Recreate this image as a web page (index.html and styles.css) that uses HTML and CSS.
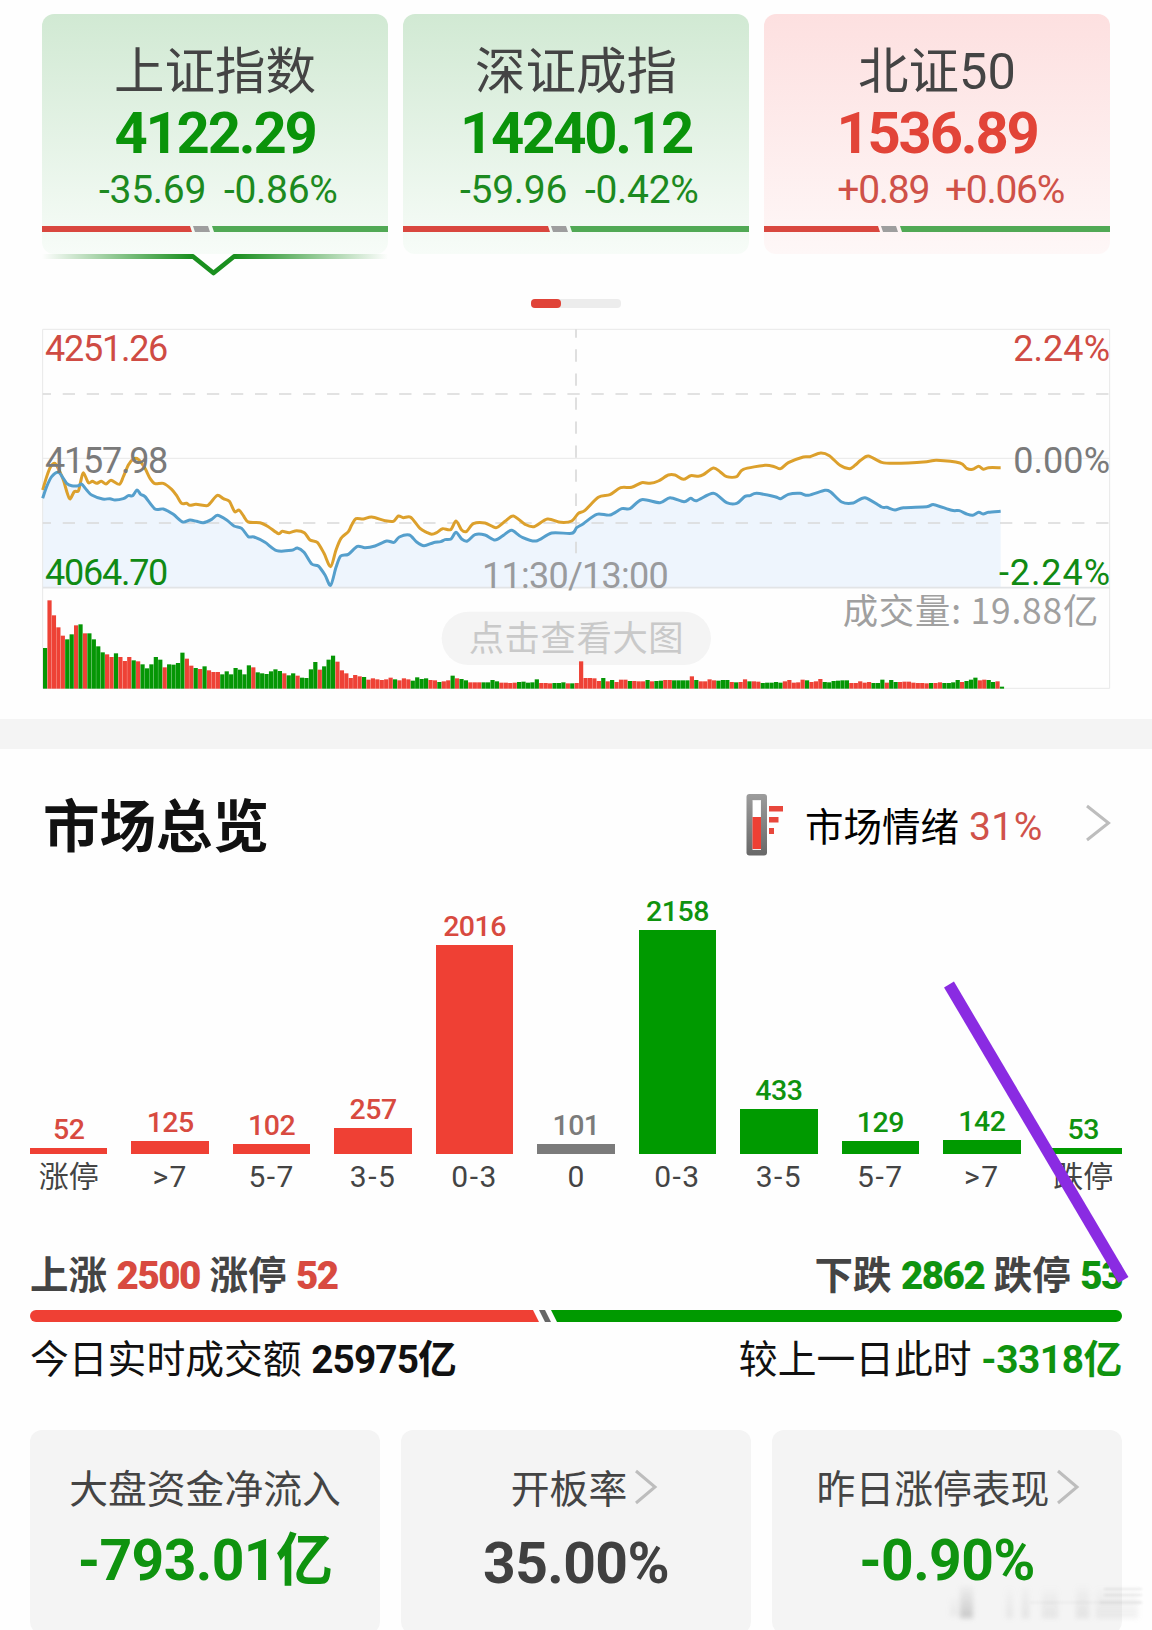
FILE: index.html
```html
<!DOCTYPE html>
<html lang="zh-CN">
<head>
    <meta charset="UTF-8">
    <meta name="viewport" content="width=device-width, initial-scale=1.0">
    <title>市场总览</title>
    <link rel="stylesheet" href="styles.css">
</head>
<body>
    <div id="indexes">
        <div class="index_card down">
            <div class="index_name">上证指数</div>
            <div class="index_price">4122.29</div>
            <div class="index_change"><span>-35.69</span><span>-0.86%</span></div>
            <div class="ratio"><i class="r" style="width: 150px"></i><i class="n"></i><i class="g"></i></div>
            <svg class="pointer" width="346" height="24" viewBox="0 0 346 24">
                <defs>
                    <linearGradient id="fade" gradientUnits="userSpaceOnUse" x1="0" y1="0" x2="346" y2="0">
                        <stop offset="0" stop-color="#1a8f1f" stop-opacity="0"/>
                        <stop offset="0.43" stop-color="#1a8f1f"/>
                        <stop offset="0.56" stop-color="#1a8f1f"/>
                        <stop offset="1" stop-color="#1a8f1f" stop-opacity="0"/>
                    </linearGradient>
                </defs>
                <path d="M0 2.500H151L171.500 19L192 2.500H346" fill="none" stroke="url(#fade)" stroke-width="4.800" stroke-linejoin="round"/>
            </svg>
        </div>
        <div class="index_card down">
            <div class="index_name">深证成指</div>
            <div class="index_price">14240.12</div>
            <div class="index_change"><span>-59.96</span><span>-0.42%</span></div>
            <div class="ratio"><i class="r" style="width: 147px"></i><i class="n"></i><i class="g"></i></div>
        </div>
        <div class="index_card up">
            <div class="index_name">北证50</div>
            <div class="index_price">1536.89</div>
            <div class="index_change"><span>+0.89</span><span>+0.06%</span></div>
            <div class="ratio"><i class="r" style="width: 116px"></i><i class="n"></i><i class="g"></i></div>
        </div>
    </div>

    <div id="pager"><i></i></div>

    <!-- 分时图，坐标为 3 倍像素 -->
    <svg id="chart" width="1122" height="380" viewBox="0 0 3366 1140">
        <path id="area" fill="#eef5fd"/>
        <g fill="none" stroke="#e8e8e8" stroke-width="3">
            <path d="M38 28H3239V1105H38Z"/>
            <path d="M38 415H3239"/>
            <path d="M38 803H3239" stroke="#e2e4e6" stroke-width="5"/>
        </g>
        <g fill="none" stroke="#d9d9d9" stroke-width="5" stroke-dasharray="37 35.100" stroke-dashoffset="12">
            <path d="M38 222H3239"/>
            <path d="M38 609H3239"/>
            <path d="M1638 28V700"/>
        </g>
        <rect x="1235" y="875" width="808" height="160" rx="80" fill="#f4f4f4"/>
        <g id="volume"></g>
        <text class="cn hint" x="1316" y="992" textLength="645">点击查看大图</text>
        <text class="cn volume_text" x="2438" y="911" textLength="767">成交量: 19.88亿</text>
        <text class="num" x="45" y="122" textLength="370" fill="#cf4b43">4251.26</text>
        <text class="num" x="2950" y="122" textLength="290" fill="#cf4b43">2.24%</text>
        <path id="avgLine" fill="none" stroke="#dca02c" stroke-width="9" stroke-linejoin="round"/>
        <path id="priceLine" fill="none" stroke="#559fcc" stroke-width="9" stroke-linejoin="round"/>
        <text class="num" x="45" y="458" textLength="370" fill="#7a7a7a">4157.98</text>
        <text class="num" x="2950" y="458" textLength="290" fill="#7a7a7a">0.00%</text>
        <text class="num" x="45" y="794" textLength="370" fill="#108a14">4064.70</text>
        <text class="num" x="2907" y="794" textLength="333" fill="#108a14">-2.24%</text>
        <text class="num" x="1356" y="803" textLength="560" fill="#9a9b9d">11:30/13:00</text>
    </svg>

    <div id="band"></div>

    <div id="overview_head">
        <h2>市场总览</h2>
        <svg class="thermo" width="38" height="64" viewBox="0 0 38 64">
            <defs>
                <linearGradient id="metal" x1="0" y1="0" x2="0" y2="1">
                    <stop offset="0" stop-color="#9c9c9c"/>
                    <stop offset="1" stop-color="#686868"/>
                </linearGradient>
            </defs>
            <rect x="0.500" y="1" width="20.500" height="61.500" rx="3" fill="url(#metal)"/>
            <rect x="6.500" y="7" width="8.500" height="50" fill="#eee"/>
            <rect x="7" y="8" width="7.500" height="17" fill="#fff"/>
            <rect x="6.500" y="24" width="8.500" height="32" fill="#ee4034"/>
            <path d="M23 13H37V18.500H23ZM23 24H32.500V29.500H23ZM23 35H28V41H23Z" fill="#e8473c"/>
        </svg>
        <span class="mood">市场情绪</span>
        <span class="mood_value">31%</span>
        <svg class="more" width="26" height="38" viewBox="0 0 26 38"><path d="M2 2L23.500 19L2 36" fill="none" stroke="#bdbdbd" stroke-width="3"/></svg>
    </div>

    <div id="histogram">
        <div class="col red"><b>52</b><i style="height: 6px"></i><span>涨停</span></div>
        <div class="col red"><b>125</b><i style="height: 13px"></i><span class="range">&gt;7</span></div>
        <div class="col red"><b>102</b><i style="height: 10px"></i><span class="range">5-7</span></div>
        <div class="col red"><b>257</b><i style="height: 26px"></i><span class="range">3-5</span></div>
        <div class="col red"><b>2016</b><i style="height: 209px"></i><span class="range">0-3</span></div>
        <div class="col gray"><b>101</b><i style="height: 10px"></i><span>0</span></div>
        <div class="col green"><b>2158</b><i style="height: 224px"></i><span class="range">0-3</span></div>
        <div class="col green"><b>433</b><i style="height: 45px"></i><span class="range">3-5</span></div>
        <div class="col green"><b>129</b><i style="height: 13px"></i><span class="range">5-7</span></div>
        <div class="col green"><b>142</b><i style="height: 14px"></i><span class="range">&gt;7</span></div>
        <div class="col green"><b>53</b><i style="height: 6px"></i><span>跌停</span></div>
    </div>

    <div class="row strong">
        <div>上涨 <b class="red">2500</b> 涨停 <b class="red">52</b></div>
        <div>下跌 <b class="green">2862</b> 跌停 <b class="green">53</b></div>
    </div>
    <div id="updown"><i class="r"></i><i class="n"></i><i class="g"></i></div>
    <div class="row total">
        <div>今日实时成交额 <b>25975亿</b></div>
        <div>较上一日此时 <b class="green">-3318亿</b></div>
    </div>

    <div id="stats">
        <div class="stat">
            <div class="stat_name">大盘资金净流入</div>
            <div class="stat_value green">-793.01亿</div>
        </div>
        <div class="stat">
            <div class="stat_name short">开板率<svg width="24" height="36" viewBox="0 0 24 36"><path d="M2 2L21 18L2 34" fill="none" stroke="#bdbdbd" stroke-width="3"/></svg></div>
            <div class="stat_value dark">35.00%</div>
        </div>
        <div class="stat">
            <div class="stat_name long">昨日涨停表现<svg width="24" height="36" viewBox="0 0 24 36"><path d="M2 2L21 18L2 34" fill="none" stroke="#bdbdbd" stroke-width="3"/></svg></div>
            <div class="stat_value green">-0.90%</div>
        </div>
    </div>

    <svg id="mark" width="1152" height="1630" viewBox="0 0 1152 1630">
        <defs>
            <linearGradient id="smear" x1="0" y1="0" x2="0" y2="1">
                <stop offset="0" stop-color="#888" stop-opacity="0.100"/>
                <stop offset="1" stop-color="#888"/>
            </linearGradient>
        </defs>
        <path d="M949 984.500L1123.500 1280" stroke="#8a2be2" stroke-width="11.500"/>
        <g class="smudge" fill="url(#smear)">
            <rect x="950" y="1596" width="8" height="20" opacity="0.100"/>
            <rect x="960" y="1586" width="13" height="32" opacity="0.400"/>
            <rect x="1006" y="1588" width="7" height="30" opacity="0.120"/>
            <rect x="1022" y="1586" width="7" height="32" opacity="0.160"/>
            <rect x="1042" y="1588" width="16" height="30" opacity="0.140"/>
            <rect x="1076" y="1586" width="13" height="32" opacity="0.160"/>
            <rect x="1096" y="1588" width="42" height="30" opacity="0.120"/>
        </g>
        <g class="smudge thin" fill="#999">
            <rect x="1104" y="1588" width="38" height="2" opacity="0.180"/>
            <rect x="1104" y="1594" width="38" height="2" opacity="0.180"/>
            <rect x="1100" y="1601" width="42" height="3" opacity="0.180"/>
            <rect x="1030" y="1601" width="70" height="3" opacity="0.060"/>
        </g>
    </svg>

    <script src="chart.js"></script>
</body>
</html>
```
FILE: styles.css
```css
body{
    margin: 0;
    width: 1152px;
    height: 1630px;
    overflow: hidden;
    position: relative;
    background-color: #fefefe;
    color: #111;
    font-family: Roboto, "Noto Sans CJK SC", sans-serif;
}
i{
    display: block;
    font-style: normal;
}
.red{color: #d84a40;}
.green{color: #0f930f;}
.dark{color: #404040;}

#indexes{
    display: flex;
    gap: 15px;
    padding: 14px 42px 0;
}
.index_card{
    position: relative;
    width: 346px;
    height: 240px;
    box-sizing: border-box;
    padding-top: 29px;
    border-radius: 12px;
    text-align: center;
}
.index_card.down{
    background: linear-gradient(#d1e9d3, #f7fcf8);
    color: #0a930a;
}
.index_card.up{
    background: linear-gradient(#fde0e0, #fef7f7);
    color: #e24438;
}
.index_name{
    height: 57px;
    line-height: 58px;
    font-size: 50.500px;
    color: #444;
}
.index_price{
    height: 62px;
    line-height: 67px;
    font-size: 58px;
    font-weight: 700;
    letter-spacing: -2.2px;
}
.index_change{
    display: flex;
    gap: 18px;
    height: 52px;
    line-height: 57px;
    font-size: 39px;
    letter-spacing: -0.3px;
}
.index_change span{
    flex: 1;
    text-align: left;
}
.index_change span:first-child{
    text-align: right;
}
.down .index_change{color: #1c8a20;}
.up .index_change{
    gap: 16px;
    letter-spacing: -1.3px;
    color: #cf5148;
}

.ratio{
    display: flex;
    height: 6px;
    margin-top: 12px;
}
.ratio .r{
    background-color: #d9473f;
    clip-path: polygon(0 0, calc(100% - 2px) 0, 100% 100%, 0 100%);
}
.ratio .n{
    width: 17px;
    background-color: #9e9e9e;
    margin: 0 2px 0 1px;
    clip-path: polygon(0 0, calc(100% - 2px) 0, 100% 100%, 2px 100%);
}
.ratio .g{
    flex: 1;
    background-color: #51a955;
    clip-path: polygon(0 0, 100% 0, 100% 100%, 2px 100%);
}
.pointer{
    position: absolute;
    top: 100%;left: 0;
}

#pager{
    width: 90px;
    height: 9px;
    margin: 45px auto 0;
    border-radius: 4px;
    background-color: #ececec;
}
#pager i{
    width: 30px;
    height: 9px;
    border-radius: 4px;
    background-color: #e04338;
}

#chart{
    display: block;
    margin: 12px 0 0 30px;
}
#chart .num{
    font-size: 108px;
    stroke: currentColor;
    stroke-width: 0;
}
#chart .cn{
    font-family: "Noto Sans CJK SC", sans-serif;
    font-size: 106px;
}
#chart .hint{fill: #c9c9c9;}
#chart .volume_text{fill: #a0a0a0;}

#band{
    height: 30px;
    margin-top: 19px;
    background-color: #f4f4f4;
}

#overview_head{
    display: flex;
    align-items: center;
    height: 92px;
    padding: 30px 41px 0 43px;
}
#overview_head h2{
    margin: 5px auto 0 0;
    font-size: 56.500px;
    line-height: 92px;
}
.mood{
    margin: -2px 0 0 21px;
    font-size: 38.500px;
    color: #000;
}
.mood_value{
    margin: 4px 0 0 10px;
    width: 76px;
    font-size: 39px;
    letter-spacing: 0.4px;
    color: #d0524a;
}
.more{
    margin: -4px 0 0 40px;
}

#histogram{
    display: grid;
    grid-template-columns: repeat(11, 1fr);
    column-gap: 24px;
    height: 319px;
    padding: 4px 30px 0;
}
.col{
    display: flex;
    flex-direction: column;
    justify-content: flex-end;
    align-items: center;
}
.col b{
    font-size: 28.500px;
    font-weight: 500;
    line-height: 35px;
    letter-spacing: -0.5px;
}
.col i{
    width: 100%;
    margin-top: 1px;
}
.col span{
    height: 40px;
    line-height: 46px;
    font-size: 30px;
    color: #444;
}
.col .range{
    letter-spacing: 1.5px;
}
.col.red i{background-color: #ef4034;}
.col.green i{background-color: #009a00;}
.col.gray i{background-color: #7b7b7b;}
.col.gray{color: #7b7b7b;}

.row{
    display: flex;
    justify-content: space-between;
    height: 54px;
    line-height: 54px;
    padding: 0 30px;
    font-size: 38.800px;
}
.row b{
    letter-spacing: -0.9px;
}
.row.total .green{
    letter-spacing: -0.4px;
}
.row.strong{
    height: 52px;
    margin-top: 55px;
    padding-bottom: 1px;
    font-size: 38.500px;
    font-weight: 700;
    color: #444;
}
.row.strong b{
    letter-spacing: -1.5px;
}
.row.total{
    padding-top: 4px;
}
#updown{
    display: flex;
    height: 12px;
    margin: 8px 30px 7px;
    border-radius: 6px;
    overflow: hidden;
}
#updown .r{
    width: 509px;
    background-color: #ef4034;
    clip-path: polygon(0 0, calc(100% - 6px) 0, 100% 100%, 0 100%);
}
#updown .n{
    width: 12px;
    background-color: #666;
    clip-path: polygon(0 0, 6px 0, 100% 100%, 6px 100%);
}
#updown .g{
    flex: 1;
    background-color: #009a00;
    clip-path: polygon(0 0, 100% 0, 100% 100%, 6px 100%);
}

#stats{
    display: grid;
    grid-template-columns: repeat(3, 1fr);
    column-gap: 21px;
    padding: 0 30px;
    margin-top: 43px;
}
.stat{
    height: 204px;
    border-radius: 12px;
    background-color: #f4f4f4;
    text-align: center;
}
.stat_name{
    display: flex;
    justify-content: center;
    align-items: center;
    height: 56px;
    padding-top: 28px;
    font-size: 38.800px;
    color: #444;
}
.stat_name.short{
    padding-left: 17px;
}
.stat_name.long{
    padding-left: 3px;
}
.stat_name svg{
    margin: 1px 0 0 7px;
}
.stat_value{
    height: 80px;
    line-height: 93px;
    font-size: 57px;
    font-weight: 700;
    letter-spacing: -0.6px;
}
.stat_value.dark{
    line-height: 100px;
}

#mark{
    position: absolute;
    top: 0;left: 0;
}
.smudge{
    filter: blur(2.500px);
}
.smudge.thin{
    filter: blur(1px);
}
```
FILE: chart.js
```js
var avg = "38,510 50,470 62,440 75,430 88,452 100,480 112,520 120,537 133,515 145,513 152,485 160,458 175,488 187,484 200,490 214,484 228,492 243,481 268,493 280,470 295,435 310,417 325,418 345,445 360,475 375,491 400,490 425,508 440,527 455,550 470,550 480,556 498,553 530,557 540,550 562,526 580,536 598,544 614,575 627,570 640,587 655,606 690,608 715,620 745,641 757,634 778,638 800,632 823,638 840,660 862,667 882,700 902,740 918,690 933,655 955,635 965,615 978,596 1000,597 1025,591 1065,602 1090,604 1105,588 1120,593 1142,592 1170,625 1190,637 1205,643 1220,638 1238,626 1262,629 1278,603 1295,630 1310,634 1330,611 1365,609 1398,623 1425,604 1450,588 1485,613 1512,620 1552,597 1592,607 1625,603 1645,580 1665,571 1705,532 1740,524 1772,503 1805,502 1835,488 1860,490 1885,483 1915,465 1935,465 1960,478 1982,467 2005,469 2020,464 2050,444 2070,455 2090,470 2120,470 2140,448 2205,436 2233,440 2252,446 2275,428 2320,411 2340,410 2372,399 2398,407 2430,436 2458,446 2475,436 2492,421 2515,408 2555,427 2595,430 2690,425 2720,421 2790,429 2810,445 2828,448 2846,439 2860,448 2875,443 2912,443"
var price = "38,535 50,500 65,470 85,457 100,475 110,490 125,497 145,497 155,492 170,510 185,525 218,537 240,536 255,540 280,536 295,527 308,527 321,510 332,523 345,530 375,567 400,567 430,583 458,606 480,600 500,604 520,608 545,598 562,586 590,600 612,618 635,625 655,650 672,651 705,667 740,692 785,691 802,684 822,697 845,732 865,738 885,765 902,796 918,742 932,708 955,703 982,679 1005,683 1035,678 1070,663 1092,667 1108,651 1138,645 1160,666 1182,677 1210,668 1232,665 1245,659 1263,657 1278,637 1295,657 1312,663 1335,644 1365,645 1395,660 1420,646 1445,631 1475,651 1518,663 1565,639 1625,640 1640,623 1660,611 1700,583 1740,585 1775,566 1800,566 1835,539 1890,548 1920,533 1962,545 1982,535 2000,542 2050,520 2090,548 2120,550 2145,529 2160,527 2180,520 2235,530 2252,536 2275,523 2310,520 2335,526 2385,511 2402,516 2435,546 2470,549 2505,533 2555,561 2570,562 2595,570 2620,563 2690,560 2712,554 2765,571 2788,572 2810,582 2828,586 2846,577 2860,582 2875,577 2912,574"
// 每分钟成交量 R 涨 G 跌
var vol = "G122 R265 R220 R184 R159 G148 G163 R190 G193 R166 G166 G148 G127 G109 R103 R95 G106 R95 R83 R95 G85 R82 G73 G61 G73 G95 G87 R64 G73 G72 G77 G108 R90 R69 G62 R59 G67 R55 R50 R50 G43 G52 G43 G62 G57 G43 G70 R64 G49 G46 G44 G52 G58 G53 R46 G40 G46 R39 G33 G32 G58 G80 R57 G67 G87 G99 R81 R55 R46 R32 R41 R37 G35 R27 R31 R28 R26 R28 R33 G28 R25 R31 R28 G24 G34 G29 G31 R26 R25 G20 R22 R25 G39 R31 G29 G25 R19 R19 R19 G19 G19 G26 G22 R18 R18 R17 R18 G20 G21 G18 G19 G28 R17 R17 R16 G17 G17 G19 R16 G16 R17 R82 R32 R32 R31 R23 G32 R22 G26 R20 R27 R27 G23 R23 R22 R22 G26 R22 G23 G24 R26 R26 G25 G25 G25 G25 R37 G26 R22 R22 R28 R25 G24 G26 G26 R20 G19 R20 R28 G22 R22 R21 G17 G18 G18 G20 G18 R22 R26 R18 R19 R27 G25 R20 R22 R29 G20 G19 G23 G24 G25 G25 R17 R17 R22 R18 R20 G17 G17 G27 R18 G26 G20 R20 R21 R21 R18 R17 R17 R16 G17 R17 R19 G17 G17 G19 G26 R20 G23 G27 G33 R25 R27 G26 G20 R22 G6"

function $(e) { return document.getElementById(e) }

// 平滑曲线
function smooth(str) {
    var p = str.split(" ").map(s => s.split(",").map(Number))
    var d = "M" + p[0]
    for (var i = 0; i < p.length - 1; i++) {
        var a = p[i - 1] || p[i], b = p[i], c = p[i + 1], e = p[i + 2] || c
        d += "C" + [b[0] + (c[0] - a[0]) / 7, b[1] + (c[1] - a[1]) / 7,
                    c[0] - (e[0] - b[0]) / 7, c[1] - (e[1] - b[1]) / 7, c[0], c[1]]
    }
    return d
}
$("avgLine").setAttribute("d", smooth(avg))
$("priceLine").setAttribute("d", smooth(price))
$("area").setAttribute("d", smooth(price) + "V803H38Z")

vol.split(" ").forEach((v, i) => {
    var h = Number(v.slice(1))
    var bar = document.createElementNS("http://www.w3.org/2000/svg", "rect")
    bar.setAttribute("x", 39 + i * 13.29)
    bar.setAttribute("y", 1106 - h)
    bar.setAttribute("width", 12.6)
    bar.setAttribute("height", h)
    bar.setAttribute("fill", v[0] == "R" ? "#ee4236" : "#059605")
    $("volume").append(bar)
})
```
